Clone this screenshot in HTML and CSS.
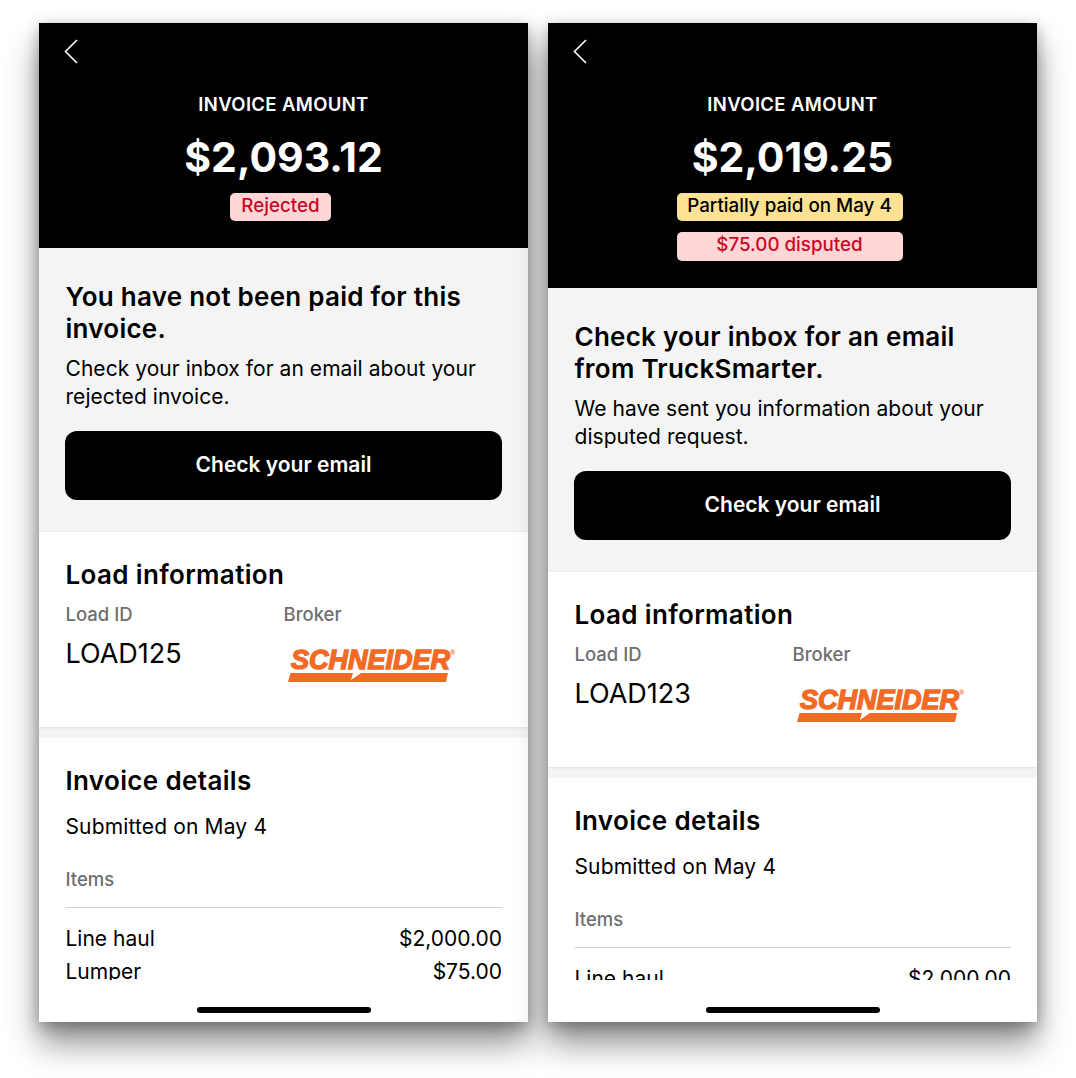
FILE: index.html
```html
<!DOCTYPE html>
<html lang="en">
<head>
<meta charset="UTF-8">
<meta name="viewport" content="width=device-width, initial-scale=1.0">
<title>Invoice status screens</title>
<link rel="stylesheet" href="styles.css">
</head>
<body>

<div class="screens">

  <div class="phone">
    <div class="scroll">
      <div class="top">
        <svg class="back" width="16" height="26" viewBox="0 0 16 26"><path d="M14 2 L2.5 13.5 L14 25" fill="none" stroke="#fff" stroke-width="1.6"/></svg>
        <div class="top-label">INVOICE AMOUNT</div>
        <div class="amount">$2,093.12</div>
        <div class="badges">
          <span class="badge badge-red badge-short">Rejected</span>
        </div>
      </div>
      <div class="notice">
        <h2>You have not been paid for this invoice.</h2>
        <p>Check your inbox for an email about your rejected invoice.</p>
        <button class="email-btn">Check your email</button>
      </div>
      <div class="card load">
        <h3>Load information</h3>
        <div class="load-cols">
          <div class="load-col">
            <div class="label">Load ID</div>
            <div class="load-id">LOAD125</div>
          </div>
          <div class="load-col">
            <div class="label">Broker</div>
            <div class="logo">
              <span class="logo-text">SCHNEIDER<sup class="logo-reg">®</sup></span>
              <svg class="logo-bar" width="160" height="9" viewBox="0 0 160 9"><path d="M2.5 0 H65 L63 7 L73 0 H160 L158 9 H0 Z" fill="#f26b26"/></svg>
            </div>
          </div>
        </div>
      </div>
      <div class="card details">
        <h3>Invoice details</h3>
        <div class="submitted">Submitted on May 4</div>
        <div class="label items">Items</div>
        <div class="row"><span>Line haul</span><span>$2,000.00</span></div>
        <div class="row"><span>Lumper</span><span>$75.00</span></div>
      </div>
    </div>
    <div class="home"><div class="home-bar"></div></div>
  </div>

  <div class="phone">
    <div class="scroll">
      <div class="top">
        <svg class="back" width="16" height="26" viewBox="0 0 16 26"><path d="M14 2 L2.5 13.5 L14 25" fill="none" stroke="#fff" stroke-width="1.6"/></svg>
        <div class="top-label">INVOICE AMOUNT</div>
        <div class="amount">$2,019.25</div>
        <div class="badges">
          <span class="badge badge-yellow">Partially paid on May 4</span>
          <span class="badge badge-red">$75.00 disputed</span>
        </div>
      </div>
      <div class="notice">
        <h2>Check your inbox for an email from TruckSmarter.</h2>
        <p>We have sent you information about your disputed request.</p>
        <button class="email-btn">Check your email</button>
      </div>
      <div class="card load">
        <h3>Load information</h3>
        <div class="load-cols">
          <div class="load-col">
            <div class="label">Load ID</div>
            <div class="load-id">LOAD123</div>
          </div>
          <div class="load-col">
            <div class="label">Broker</div>
            <div class="logo">
              <span class="logo-text">SCHNEIDER<sup class="logo-reg">®</sup></span>
              <svg class="logo-bar" width="160" height="9" viewBox="0 0 160 9"><path d="M2.5 0 H65 L63 7 L73 0 H160 L158 9 H0 Z" fill="#f26b26"/></svg>
            </div>
          </div>
        </div>
      </div>
      <div class="card details">
        <h3>Invoice details</h3>
        <div class="submitted">Submitted on May 4</div>
        <div class="label items">Items</div>
        <div class="row"><span>Line haul</span><span>$2,000.00</span></div>
        <div class="row"><span>Lumper</span><span>$75.00</span></div>
      </div>
    </div>
    <div class="home"><div class="home-bar"></div></div>
  </div>

</div>

</body>
</html>
```

FILE: styles.css
```css
body {
  margin: 0;
  height: 1078px;
  overflow: hidden;
  background: #fff;
  font-family: Inter, "Noto Sans", sans-serif;
  color: #000;
}

.screens {
  display: flex;
  gap: 20px;
  padding: 23px 39px 0;
}

.phone {
  width: 489px;
  height: 999px;
  background: #fff;
  display: flex;
  flex-direction: column;
  box-shadow: 0 22px 30px rgba(0, 0, 0, 0.42), 0 4px 14px rgba(0, 0, 0, 0.3);
}

.scroll {
  height: 957px;
  overflow: hidden;
  background: #f4f4f4;
}

.top {
  position: relative;
  background: #000;
  color: #fff;
  text-align: center;
  padding: 70px 0 27px;
}

.back {
  position: absolute;
  left: 24px;
  top: 15px;
}

.top-label {
  font-size: 18.5px;
  line-height: 22px;
  font-weight: 600;
  letter-spacing: 0.35px;
}

.amount {
  margin-top: 18px;
  font-size: 41px;
  line-height: 49px;
  font-weight: 700;
}

.badges {
  margin-top: 11px;
  display: flex;
  flex-direction: column;
  align-items: center;
  gap: 11px;
}

.badge {
  width: 226px;
  height: 28px;
  margin-left: -6px;
  border-radius: 5px;
  font-size: 18.8px;
  line-height: 26px;
  font-weight: 500;
}

.badge-short {
  width: 101px;
}

.badge-yellow + .badge-red {
  height: 29px;
}

.badge-red {
  background: #ffd6d6;
  color: #c9082a;
}

.badge-yellow {
  background: #fde293;
  color: #000;
}

.notice {
  padding: 33px 26px 31px;
  border-bottom: 1px solid #ececec;
}

h2 {
  margin: 0 0 0 0.5px;
  font-size: 26px;
  line-height: 32px;
  font-weight: 600;
  letter-spacing: 0.25px;
}

.notice p {
  margin: 10px 0 0 0.5px;
  font-size: 21px;
  line-height: 28px;
  letter-spacing: 0.05px;
}

.email-btn {
  display: block;
  width: 100%;
  height: 69px;
  margin-top: 20px;
  padding: 0 0 2px;
  background: #000;
  color: #fff;
  border: none;
  border-radius: 12px;
  font-family: Inter, "Noto Sans", sans-serif;
  font-size: 21px;
  font-weight: 600;
}

.card {
  background: #fff;
  padding: 0 26px 0 26.5px;
}

h3 {
  margin: 0;
  font-size: 26px;
  line-height: 32px;
  font-weight: 600;
  letter-spacing: 0.35px;
}

.load {
  height: 195px;
  padding-top: 27px;
  box-sizing: border-box;
  margin-bottom: 11px;
  box-shadow: 0 1px 2px rgba(0, 0, 0, 0.08);
}

.load-cols {
  display: flex;
  margin-top: 11px;
}

.load-col {
  width: 218px;
}

.label {
  font-size: 18.5px;
  line-height: 24px;
  font-weight: 500;
  color: #6f6f6f;
}

.load-id {
  margin-top: 12px;
  font-size: 27px;
  line-height: 32px;
}

.logo {
  margin-top: 23px;
  margin-left: 4.5px;
  width: 170px;
}

.logo-text {
  display: block;
  height: 24px;
  font-family: "Liberation Sans", sans-serif;
  font-style: italic;
  font-weight: 700;
  font-size: 27px;
  line-height: 22px;
  color: #f26b26;
  -webkit-text-stroke: 1.4px #f26b26;
  padding-left: 3px;
}

.logo-reg {
  font-size: 7px;
  line-height: 0;
  vertical-align: 14px;
  -webkit-text-stroke: 0;
}

.logo-bar {
  display: block;
}

.details {
  padding-top: 27px;
  padding-bottom: 60px;
}

.submitted {
  margin-top: 16px;
  font-size: 21px;
  line-height: 28px;
  letter-spacing: 0.15px;
}

.items {
  margin-top: 26px;
  padding-bottom: 16px;
  border-bottom: 1px solid #cfcfcf;
}

.row {
  display: flex;
  justify-content: space-between;
  font-size: 21px;
  line-height: 33px;
}

.items + .row {
  margin-top: 14px;
}

.home {
  flex: 1;
  display: flex;
  justify-content: center;
  padding-top: 27px;
}

.home-bar {
  width: 174px;
  height: 6px;
  border-radius: 3px;
  background: #000;
}
```
